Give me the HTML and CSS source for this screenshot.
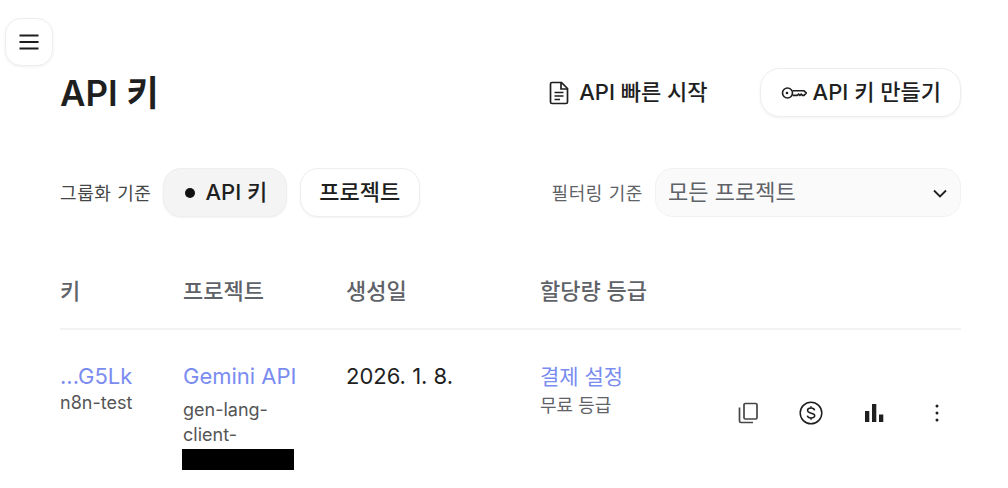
FILE: index.html
```html
<!DOCTYPE html>
<html lang="ko">
<head>
  <meta charset="UTF-8">
  <meta name="viewport" content="width=device-width, initial-scale=1.0">
  <link rel="stylesheet" href="styles.css">
  <title>API 키</title>
</head>
<body>
  <button class="menu-btn" aria-label="메뉴">
    <svg width="24" height="24" viewBox="0 0 24 24"><path d="M2.500 5.500h19M2.500 12h19M2.500 18.500h19" stroke="#1f1f1f" stroke-width="1.800" fill="none"/></svg>
  </button>

  <main class="page">
    <div class="page-header">
      <h1 class="page-title">API 키</h1>
      <div class="header-actions">
        <a class="quickstart">
          <svg width="24" height="24" viewBox="0 0 24 24" fill="none" stroke="#1f1f1f" stroke-width="1.700"><path d="M5 1.500h9.500l6 6v13.500a1.500 1.500 0 0 1-1.500 1.500H5A1.500 1.500 0 0 1 3.500 21V3A1.500 1.500 0 0 1 5 1.500z"/><path d="M14 1.800v6.200h6.200M7.500 11.500h9M7.500 15h9M7.500 18.500h5.500"/></svg>
          <span class="lifted">API 빠른 시작</span>
        </a>
        <button class="create-btn">
          <svg width="26" height="24" viewBox="0 0 26 24" fill="none" stroke="#1f1f1f" stroke-width="1.600"><circle cx="6.500" cy="12" r="5"/><circle cx="6" cy="12" r="1.300" fill="#1f1f1f" stroke="none"/><path d="M11.500 9.800h11.500l2.300 2.200-2.300 2.400h-1.500l-1.300-1.200-1.300 1.200-1.300-1.200-1.300 1.200h-4.800"/></svg>
          <span class="lifted">API 키 만들기</span>
        </button>
      </div>
    </div>

    <div class="toolbar">
      <div class="group-by">
        <span class="toolbar-label">그룹화 기준</span>
        <button class="chip chip-active"><span class="chip-dot"></span><span class="lifted">API 키</span></button>
        <button class="chip"><span class="lifted">프로젝트</span></button>
      </div>
      <div class="filter-by">
        <span class="toolbar-label toolbar-label-muted">필터링 기준</span>
        <div class="select">
          <span class="lifted">모든 프로젝트</span>
          <svg width="24" height="24" viewBox="0 0 24 24" fill="none" stroke="#1f1f1f" stroke-width="1.800"><path d="M6 9.500l6 6 6-6"/></svg>
        </div>
      </div>
    </div>

    <div class="table">
      <div class="table-row table-head">
        <div>키</div>
        <div>프로젝트</div>
        <div>생성일</div>
        <div>할당량 등급</div>
      </div>
      <div class="table-row table-body">
        <div>
          <a class="link">...G5Lk</a>
          <div class="sub sub-key">n8n-test</div>
        </div>
        <div>
          <a class="link">Gemini API</a>
          <div class="sub sub-project">gen-lang-<br>client-</div>
          <div class="redacted"></div>
        </div>
        <div class="date">2026. 1. 8.</div>
        <div>
          <a class="link link-billing">결제 설정</a>
          <div class="sub sub-tier">무료 등급</div>
        </div>
        <div class="row-actions">
          <svg width="24" height="24" viewBox="0 0 24 24" fill="none" stroke="#444746" stroke-width="1.700"><rect x="8" y="2.500" width="13" height="15.500" rx="1.300"/><path d="M3.500 6.500v13.500a1.500 1.500 0 0 0 1.500 1.500h12"/></svg>
          <svg width="24" height="24" viewBox="0 0 24 24" fill="none" stroke="#1f1f1f" stroke-width="1.500"><circle cx="12" cy="12" r="10.800"/><path d="M15.600 9.300c-.3-1.400-1.700-2.200-3.600-2.200-2 0-3.500 1-3.500 2.500 0 3.500 7.200 1.700 7.200 5 0 1.500-1.500 2.400-3.700 2.400-2 0-3.400-.9-3.700-2.300M12 5.200v1.900M12 16.900v1.900"/></svg>
          <svg width="24" height="24" viewBox="0 0 24 24" fill="#1f1f1f"><rect x="3" y="10" width="4.300" height="11"/><rect x="10" y="3" width="4.300" height="18"/><rect x="17" y="13.500" width="4.300" height="7.500"/></svg>
          <svg width="24" height="24" viewBox="0 0 24 24" fill="#1f1f1f"><circle cx="12" cy="5" r="1.500"/><circle cx="12" cy="12" r="1.500"/><circle cx="12" cy="19" r="1.500"/></svg>
        </div>
      </div>
    </div>
  </main>
</body>
</html>
```

FILE: styles.css
```css
body {
  margin: 0;
  background-color: #fff;
  color: #1f1f1f;
  font-family: 'Inter', 'Noto Sans CJK KR', sans-serif;
  overflow: hidden;
}

button {
  font-family: inherit;
  color: inherit;
  cursor: pointer;
}

/* the CJK fallback pushes the baseline down inside centered rows */
.lifted {
  margin-bottom: 5px;
}

.menu-btn {
  position: absolute;
  left: 5px;
  top: 18px;
  width: 48px;
  height: 48px;
  display: flex;
  align-items: center;
  justify-content: center;
  padding: 0;
  background-color: #fff;
  border: 1px solid #eeeeee;
  border-radius: 16px;
  box-shadow: 0 1px 3px rgba(0, 0, 0, 0.06);
}

.page {
  padding: 68px 47px 0 60px;
}

.page-header {
  display: flex;
  justify-content: space-between;
  align-items: center;
  height: 49px;
}

.page-title {
  margin: 0;
  font-size: 35px;
  font-weight: 600;
  line-height: 48px;
}

.header-actions {
  display: flex;
  align-items: center;
  gap: 52px;
}

.quickstart {
  display: flex;
  align-items: center;
  gap: 8px;
  font-size: 22px;
  font-weight: 500;
}

.create-btn {
  display: flex;
  align-items: center;
  gap: 6px;
  height: 49px;
  padding: 0 19px 0 20px;
  font-size: 22px;
  font-weight: 500;
  background-color: #fff;
  border: 1px solid #eeeeee;
  border-radius: 20px;
  box-shadow: 0 1px 3px rgba(0, 0, 0, 0.06);
}

.toolbar {
  display: flex;
  justify-content: space-between;
  align-items: center;
  margin-top: 51px;
  height: 49px;
}

.group-by,
.filter-by {
  display: flex;
  align-items: center;
}

.toolbar-label {
  font-size: 18px;
  letter-spacing: 0.6px;
  color: #444746;
  margin-right: 12px;
  margin-bottom: 2px;
}

.toolbar-label-muted {
  color: #5f6368;
}

.chip {
  display: flex;
  align-items: center;
  height: 49px;
  padding: 0 19px 0 18px;
  margin-right: 13px;
  font-size: 22px;
  font-weight: 500;
  background-color: #fff;
  border: 1px solid #eeeeee;
  border-radius: 18px;
  box-shadow: 0 1px 2px rgba(0, 0, 0, 0.05);
}

.chip-active {
  padding: 0 19px 0 21px;
  background-color: #f4f4f4;
}

.chip-dot {
  width: 10px;
  height: 10px;
  margin-right: 10px;
  background-color: #111;
  border-radius: 50%;
}

.select {
  display: flex;
  justify-content: space-between;
  align-items: center;
  box-sizing: border-box;
  width: 306px;
  height: 49px;
  padding: 0 8px 0 12px;
  font-size: 22px;
  color: #5f6368;
  background-color: #fafafa;
  border: 1px solid #f2f2f2;
  border-radius: 18px;
}

.table {
  margin-top: 51px;
}

.table-row {
  display: grid;
  grid-template-columns: 123px 163px 194px 180px 1fr;
}

.table-head {
  height: 60px;
  font-size: 22px;
  font-weight: 500;
  color: #5f6368;
  line-height: 46px;
  border-bottom: 2px solid #f3f3f3;
}

.table-body {
  padding-top: 30px;
  font-size: 22px;
  line-height: 32px;
}

.link {
  color: #7a8cf0;
}

.link-billing {
  font-size: 21px;
}

.sub {
  font-size: 18px;
  color: #555;
}

.sub-key {
  line-height: 24px;
  margin-top: -1px;
}

.sub-tier {
  line-height: 24px;
  margin-top: 1px;
  color: #5f6368;
}

.sub-project {
  line-height: 25px;
  margin-top: 5px;
}

.redacted {
  width: 112px;
  height: 21px;
  margin: 2px 0 0 -1px;
  background-color: #000;
}

.row-actions {
  display: flex;
  justify-content: flex-end;
  gap: 39px;
  padding: 41px 12px 0 0;
}
```
